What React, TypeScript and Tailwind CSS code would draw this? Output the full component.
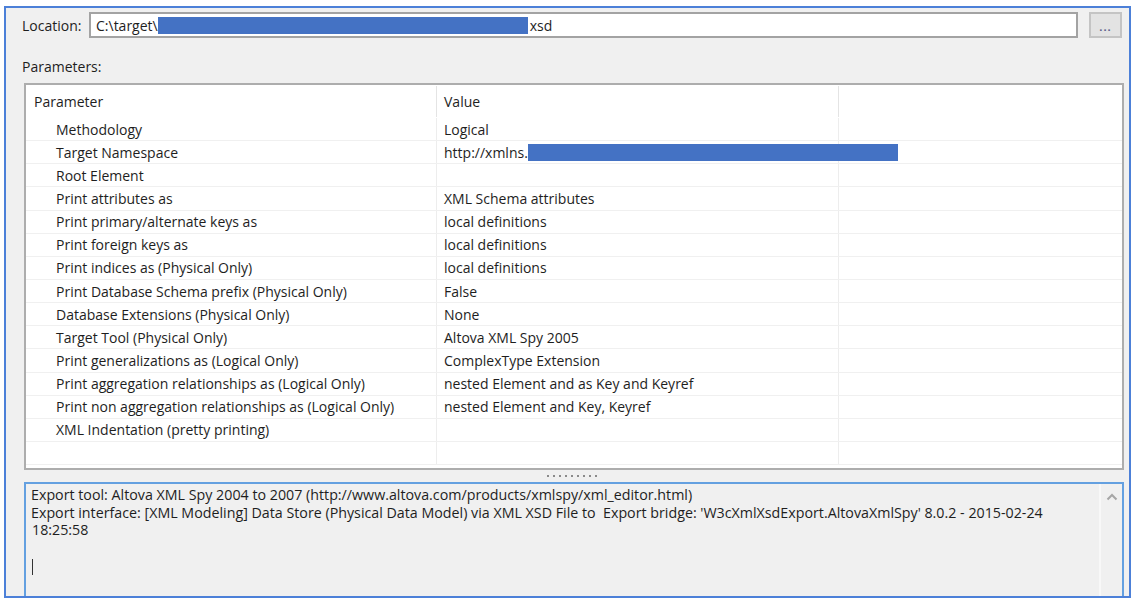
import React from "react";

type Row = { name: string; value?: string; redacted?: boolean };

const rows: Row[] = [
  { name: "Methodology", value: "Logical" },
  { name: "Target Namespace", value: "http://xmlns.", redacted: true },
  { name: "Root Element" },
  { name: "Print attributes as", value: "XML Schema attributes" },
  { name: "Print primary/alternate keys as", value: "local definitions" },
  { name: "Print foreign keys as", value: "local definitions" },
  { name: "Print indices as (Physical Only)", value: "local definitions" },
  { name: "Print Database Schema prefix (Physical Only)", value: "False" },
  { name: "Database Extensions (Physical Only)", value: "None" },
  { name: "Target Tool (Physical Only)", value: "Altova XML Spy 2005" },
  { name: "Print generalizations as (Logical Only)", value: "ComplexType Extension" },
  { name: "Print aggregation relationships as (Logical Only)", value: "nested Element and as Key and Keyref" },
  { name: "Print non aggregation relationships as (Logical Only)", value: "nested Element and Key, Keyref" },
  { name: "XML Indentation (pretty printing)" },
  { name: "" },
];

export default function App() {
  return (
    <div
      className="h-[603px] w-[1136px] overflow-hidden bg-white pl-[4px] pt-[6px] text-[14px] text-[#1e1e1e]"
      style={{ fontFamily: '"Open Sans", "Noto Sans", sans-serif' }}
    >
      <div className="flex h-[592px] w-[1127px] flex-col overflow-hidden border-2 border-[#4c80d8] bg-[#f0f0f0]">
        {/* location row */}
        <div className="flex items-center pl-[16px] pr-[6px] pt-[4px]">
          <span className="w-[67px] pt-[1px] leading-none">Location:</span>
          <div className="flex h-[26px] w-[989px] items-center border-2 border-[#a3a3a3] bg-white pl-[5px] pt-[1px] leading-none">
            <span>C:\target\</span>
            <span className="ml-[0px] h-[17px] w-[370px] bg-[#4472c4]" />
            <span className="ml-[2px]">xsd</span>
          </div>
          <button
            type="button"
            className="ml-[11px] flex h-[26px] w-[33px] items-center justify-center border-2 border-[#c4c4c4] bg-[#e3e3e3] pt-[2px] text-[11px] font-bold leading-none tracking-[1px] text-[#5a5f8a]"
          >
            ...
          </button>
        </div>

        <div className="pl-[16px] pt-[22px] leading-none">Parameters:</div>

        {/* parameters table */}
        <div className="ml-[18px] mt-[9px] h-[387px] w-[1100px] shrink-0 border-2 border-[#adadad] bg-white">
          <div className="flex h-[33px] items-center">
            <div className="flex h-full w-[410px] items-center pl-[8px]">Parameter</div>
            <div className="flex h-[31px] w-[402px] items-center border-l border-[#e4e4e4] pl-[7px]">Value</div>
            <div className="h-[31px] flex-1 border-l border-[#e4e4e4]" />
          </div>
          {rows.map((row, i) => (
            <div key={i} className="flex h-[23.15px] items-center border-b border-[#f0f0f0]">
              <div className="flex h-full w-[410px] shrink-0 items-center whitespace-nowrap pl-[30px]">{row.name}</div>
              <div className="flex h-full w-[402px] shrink-0 items-center whitespace-nowrap border-l border-[#ededed] pl-[7px]">
                {row.value}
                {row.redacted ? (
                  <span className="relative z-10 h-[17px] w-[370px] shrink-0 bg-[#4472c4]" />
                ) : null}
              </div>
              <div className="h-full flex-1 border-l border-[#ededed]" />
            </div>
          ))}
        </div>

        {/* splitter */}
        <div className="flex h-[12px] shrink-0 items-center justify-center gap-[4px] pl-[28px] pr-[20px]">
          {Array.from({ length: 9 }).map((_, i) => (
            <span key={i} className="h-[2px] w-[2px] bg-[#8a8a8a]" />
          ))}
        </div>

        {/* output text */}
        <div className="ml-[18px] flex h-[130px] w-[1100px] shrink-0 border-2 border-[#64a0e0] bg-[#f0f0f0]">
          <div className="flex-1 whitespace-nowrap pl-[5px] pt-[2px] text-[14.25px] leading-[17.5px]">
            <div>Export tool: Altova XML Spy 2004 to 2007 (http://www.altova.com/products/xmlspy/xml_editor.html)</div>
            <div>
              Export interface: [XML Modeling] Data Store (Physical Data Model) via XML XSD File to&nbsp; Export bridge:
              'W3cXmlXsdExport.AltovaXmlSpy' 8.0.2 - 2015-02-24
            </div>
            <div className="pl-[1px]">18:25:58</div>
            <div className="ml-[1px] mt-[20px] h-[16px] w-[1px] bg-[#333]" />
          </div>
          <div className="flex w-[23px] justify-center border-l-2 border-[#f8f8f8] pt-[9px]">
            <svg width="12" height="8" viewBox="0 0 12 8" fill="none">
              <path d="M1.5 6.5L6 2l4.5 4.5" stroke="#a6a6a6" strokeWidth="2" />
            </svg>
          </div>
        </div>
      </div>
    </div>
  );
}
